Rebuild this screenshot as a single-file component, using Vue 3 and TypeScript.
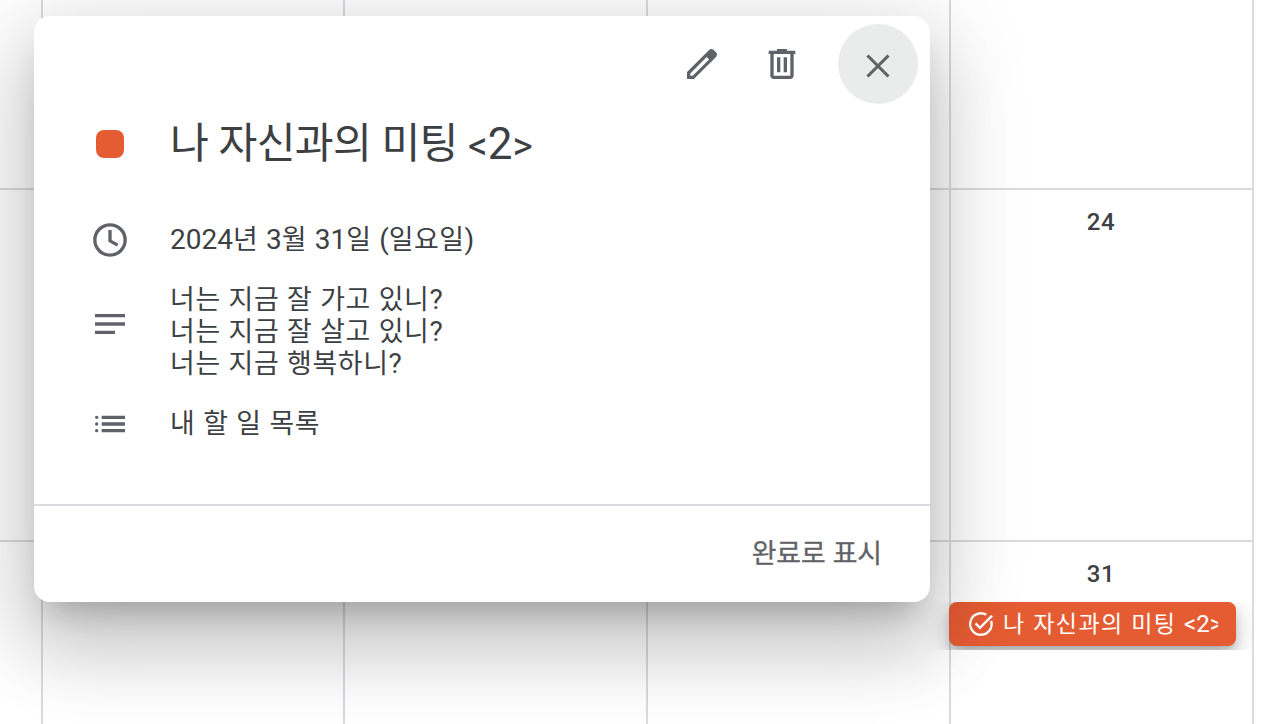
<script setup lang="ts">
import { h, type FunctionalComponent } from 'vue'

/* Splits a string so Hangul runs can be sized separately from Latin ones. */
const MixedText: FunctionalComponent<{ text: string }> = (props) =>
  h(
    'span',
    { class: 'mixed' },
    (props.text.match(/[가-힣]+| +|[<>]|[^가-힣 <>]+/g) ?? []).map((part) =>
      h(
        'span',
        { class: /[가-힣]/.test(part) ? 'ko' : /[<>]/.test(part) ? 'angle' : part.trim() ? 'latin' : 'gap' },
        part,
      ),
    ),
  )
MixedText.props = ['text']

const title = '나 자신과의 미팅 <2>'
const dateText = '2024년 3월 31일 (일요일)'
const notes = ['너는 지금 잘 가고 있니?', '너는 지금 잘 살고 있니?', '너는 지금 행복하니?']
const listName = '내 할 일 목록'

const weeks: string[][] = [
  ['', '', '', '', ''],
  ['', '', '', '', '24'],
  ['', '', '', '', '31'],
]
</script>

<template>
  <main class="screen">
    <div class="calendar">
      <template v-for="(week, w) in weeks" :key="w">
        <div v-for="(day, d) in week" :key="`${w}-${d}`" class="cell">
          <span v-if="day" class="day">{{ day }}</span>
        </div>
      </template>
    </div>

    <div class="event-row">
      <div class="chip">
        <svg class="chip-icon" viewBox="0 0 24 24">
          <path d="M20.7 9.2A9.2 9.2 0 1 1 16.6 4" fill="none" stroke="currentColor" stroke-width="2" transform="translate(0 .1)" />
          <path d="M7.3 11.5l3.8 3.8L21.5 4.9" fill="none" stroke="currentColor" stroke-width="2.1" />
        </svg>
        <div class="chip-label"><MixedText :text="title" /></div>
      </div>
    </div>

    <section class="dialog">
      <header class="toolbar">
        <button class="tool" aria-label="수정">
          <svg viewBox="0 0 24 24"><path d="M20.41 4.94l-1.35-1.35c-.78-.78-2.05-.78-2.83 0L3 16.82V21h4.18L20.41 7.77c.79-.78.79-2.05 0-2.83zM6.41 19.06L5 19v-1.36l9.82-9.82 1.41 1.41-9.82 9.83z" /></svg>
        </button>
        <button class="tool" aria-label="삭제">
          <svg viewBox="0 0 24 24"><path d="M15 4V3H9v1H4v2h1v13c0 1.1.9 2 2 2h10c1.1 0 2-.9 2-2V6h1V4h-5zm2 15H7V6h10v13zM9 8h2v9H9V8zm4 0h2v9h-2V8z" /></svg>
        </button>
        <button class="tool close" aria-label="닫기">
          <svg viewBox="0 0 40 40"><path d="M9.5 11.5l21 21M30.5 11.5l-21 21" fill="none" stroke="currentColor" stroke-width="3.1" /></svg>
        </button>
      </header>

      <div class="row title-row">
        <div class="lead"><i class="swatch"></i></div>
        <h1><MixedText :text="title" /></h1>
      </div>

      <div class="row date-row">
        <div class="lead">
          <svg viewBox="0 0 24 24">
            <circle cx="12" cy="12" r="9.1" fill="none" stroke="currentColor" stroke-width="2" />
            <path d="M12 6v6.5l4.6 2.6" fill="none" stroke="currentColor" stroke-width="2" />
          </svg>
        </div>
        <p class="date"><MixedText :text="dateText" /></p>
      </div>

      <div class="row notes-row">
        <div class="lead">
          <svg viewBox="0 0 24 24"><path d="M3 18h12v-2H3v2zM3 6v2h18V6H3zm0 7h18v-2H3v2z" /></svg>
        </div>
        <div class="notes">
          <p v-for="line in notes" :key="line"><MixedText :text="line" /></p>
        </div>
      </div>

      <div class="row list-row">
        <div class="lead">
          <svg viewBox="0 0 24 24">
            <path d="M7 7h14v2H7zM7 11h14v2H7zM7 15h14v2H7z" />
            <circle cx="4" cy="8" r="1" /><circle cx="4" cy="12" r="1" /><circle cx="4" cy="16" r="1" />
          </svg>
        </div>
        <p><MixedText :text="listName" /></p>
      </div>

      <footer class="footer">
        <button class="done"><MixedText text="완료로 표시" /></button>
      </footer>
    </section>
  </main>
</template>

<style>
body {
  margin: 0;
  overflow: hidden;
}

.mixed {
  white-space: pre;
}

.mixed .ko {
  font-size: 0.96em;
  letter-spacing: var(--ko-spacing, 0);
}

.mixed .gap {
  letter-spacing: var(--gap-spacing, 0);
}

.mixed .angle {
  font-size: var(--angle-size, 1em);
}

.mixed .latin,
.mixed .angle {
  line-height: 1;
  vertical-align: var(--latin-shift, 0);
}
</style>

<style scoped>
.screen {
  position: relative;
  width: 1274px;
  height: 724px;
  overflow: hidden;
  background: #fff;
  color: #3c4043;
  font-family: Roboto, 'Noto Sans CJK KR', sans-serif;
}

.calendar {
  display: grid;
  grid-template-columns: 43px 302px 303px 303px 303px;
  grid-template-rows: 190px 352px 352px;
  width: 1254px;
}

.cell {
  box-sizing: border-box;
  border-right: 2px solid #dadbe0;
  border-bottom: 2px solid #dadbe0;
  padding-top: 18px;
  text-align: center;
}

.day {
  margin-right: 1px;
  font-size: 24px;
  font-weight: 500;
  line-height: 28px;
  letter-spacing: 0.6px;
}

.event-row {
  position: absolute;
  top: 602px;
  left: 0;
  width: 1252px;
  height: 48px;
  overflow: hidden;
}

.chip {
  display: flex;
  align-items: center;
  box-sizing: border-box;
  width: 287px;
  height: 44px;
  margin-left: 949px;
  padding: 0 18px;
  border-radius: 8px;
  background: #e55c33;
  color: #fff;
  box-shadow:
    0 12px 20px 0 rgba(0, 0, 0, 0.14),
    0 2px 36px 0 rgba(0, 0, 0, 0.12),
    0 6px 10px -2px rgba(0, 0, 0, 0.2);
}

.chip-icon {
  flex: none;
  width: 28px;
  height: 28px;
}

.chip-label {
  flex: 1;
  margin-left: 8px;
  overflow: hidden;
  font-size: 24px;
  line-height: 43px;
  --ko-spacing: 1.4px;
  --gap-spacing: 1.7px;
}

.dialog {
  position: absolute;
  top: 16px;
  left: 34px;
  display: flex;
  flex-direction: column;
  width: 896px;
  height: 586px;
  border-radius: 16px;
  background: #fff;
  box-shadow:
    0 48px 76px 6px rgba(0, 0, 0, 0.14),
    0 18px 92px 16px rgba(0, 0, 0, 0.12),
    0 22px 30px -14px rgba(0, 0, 0, 0.2);
}

.toolbar {
  display: flex;
  justify-content: flex-end;
  height: 80px;
  padding: 8px 12px 0 0;
}

button {
  margin: 0;
  padding: 0;
  border: 0;
  background: none;
  color: #5f6368;
  font: inherit;
}

.tool {
  display: flex;
  align-items: center;
  justify-content: center;
  width: 80px;
  height: 80px;
  border-radius: 50%;
}

.tool.close {
  margin-left: 16px;
  background: #eaeceb;
}

svg {
  width: 40px;
  height: 40px;
  fill: currentColor;
}

.row {
  display: flex;
  align-items: center;
}

.lead {
  display: flex;
  align-items: center;
  justify-content: center;
  width: 40px;
  margin: 0 40px 0 56px;
  color: #5f6368;
}

.swatch {
  width: 28px;
  height: 28px;
  border-radius: 8px;
  background: #e55c33;
}

h1,
p {
  margin: 0;
  font-weight: 400;
}

p {
  height: 32px;
  font-size: 28px;
  line-height: 32px;
  --ko-spacing: 0.65px;
  --gap-spacing: 0.8px;
}

.date {
  --ko-spacing: 0.5px;
}

h1 {
  padding-bottom: 1px;
  font-size: 44px;
  line-height: 56px;
  --ko-spacing: -0.7px;
  --gap-spacing: -0.6px;
  --angle-size: 0.88em;
  --latin-shift: -1px;
}

.title-row {
  height: 56px;
  margin-top: 12px;
}

.date-row {
  height: 40px;
  margin-top: 48px;
}

.notes-row {
  height: 96px;
  margin-top: 16px;
}

.notes {
  padding-top: 16px;
}

.list-row {
  height: 40px;
  margin-top: 32px;
}

.footer {
  display: flex;
  align-items: center;
  justify-content: flex-end;
  box-sizing: border-box;
  height: 98px;
  margin-top: auto;
  padding-right: 48px;
  border-top: 2px solid #dadbe0;
}

.done {
  font-size: 28px;
  font-weight: 400;
  line-height: 40px;
  -webkit-text-stroke: 0.3px currentColor;
  --ko-spacing: -0.1px;
  --gap-spacing: 0.2px;
}
</style>
